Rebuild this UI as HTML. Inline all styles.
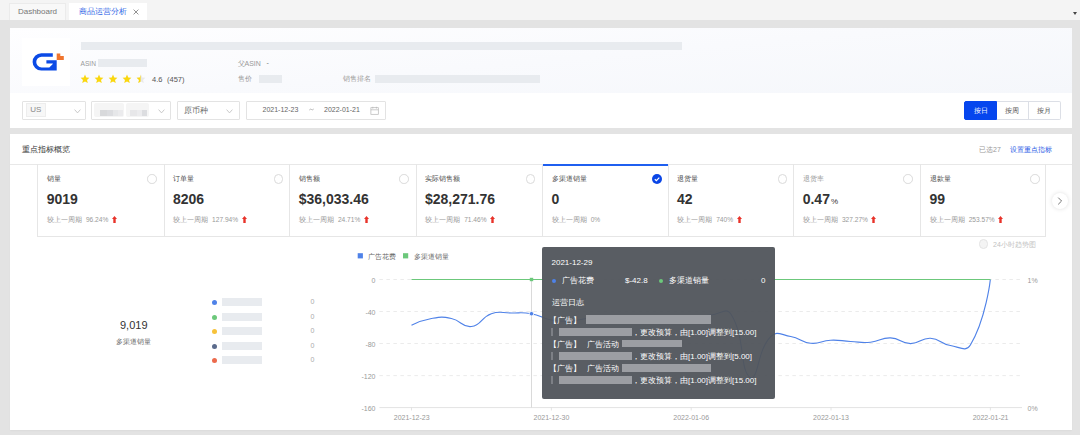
<!DOCTYPE html>
<html><head><meta charset="utf-8">
<style>
*{box-sizing:border-box;margin:0;padding:0}
html,body{width:1080px;height:435px;overflow:hidden}
body{position:relative;background:#e3e3e3;font-family:"Liberation Sans",sans-serif;color:#333}
.a{position:absolute;white-space:nowrap}
.topbar{left:0;top:0;width:1080px;height:20px;background:#f4f4f4}
.tab{position:absolute;top:3px;height:17px;font-size:8px;line-height:17px}
.ph{position:absolute;background:#e8ebef}
.sel{position:absolute;top:101px;height:18.6px;border:1px solid #e3e3e3;background:#fff;border-radius:1px}
.chev{position:absolute;width:7px;height:5px}
.card{position:absolute;top:164px;height:72px;width:126.1px}
.card .lb{position:absolute;left:9.5px;top:10px;font-size:7px;color:#4a4a4a}
.card .rd{position:absolute;right:6.5px;top:10px;width:9.5px;height:9.5px;border:0.8px solid #dadada;border-radius:50%}
.card .val{position:absolute;left:9.3px;top:27.3px;font-size:14px;font-weight:bold;color:#333;letter-spacing:0px}
.card .cmp{position:absolute;left:9.5px;top:51px;font-size:7px;color:#999}
.card .cmp b{font-weight:normal;margin-left:4px;font-size:6.6px}
.card .up{display:inline-block;width:5px;height:7px;margin-left:3.5px;vertical-align:-1px;background:none}
.btn{position:absolute;top:101px;height:18.5px;font-size:7px;line-height:17.5px;text-align:center;border:1px solid #dcdfe6;color:#555;background:#fff}
.tt{font-size:8px;color:#fff}
.cj{display:inline-block;white-space:nowrap}
.tbar{position:absolute;background:#9c9ea3}
</style></head><body>
<div class="a topbar"></div>
<div class="tab" style="left:9px;width:57px;background:#f8f8f8;border:1px solid #ebebeb;border-bottom:none;color:#777;text-align:center;line-height:15.5px">Dashboard</div>
<div class="tab" style="left:69px;width:78px;background:#fff;">
  <span class="a" style="left:9.5px;top:0;color:#2e63e6">商品运营分析</span>
  <svg class="a" style="left:63.5px;top:6.2px" width="6" height="6" viewBox="0 0 6 6"><path d="M0.6 0.6 L5.4 5.4 M5.4 0.6 L0.6 5.4" stroke="#777" stroke-width="0.8"/></svg>
</div>
<div class="a" style="left:1072.6px;top:12px;width:0;height:0;border-left:2.8px solid transparent;border-right:2.8px solid transparent;border-top:3.4px solid #444"></div>

<!-- panel 1 -->
<div class="a" style="left:10px;top:28px;width:1062px;height:100px;background:#fff"></div>
<div class="a" style="left:10px;top:28px;width:1062px;height:65.4px;background:linear-gradient(175deg,#fefeff 0%,#f9fafd 50%,#f5f7fb 100%)"></div>
<div class="a" style="left:22px;top:38px;width:48px;height:48px;background:#fff"></div>
<svg class="a" style="left:22px;top:38px" width="48" height="48" viewBox="0 0 48 48">
  <path d="M30.8 15.2 H19.3 A8.7 8.7 0 0 0 19.3 32.6 H34.7 V22.3 H24.4 V25.5 H30.8 V26 L27.3 29.4 H19.6 A5.35 5.35 0 0 1 19.6 18.7 H30.8 Z" fill="#0b4ae6"/>
  <path d="M34.7 15.5 H38.3 V18 H41.8 V22 H34.7 Z" fill="#f0752e"/>
</svg>
<div class="ph" style="left:81px;top:42px;width:601px;height:8px"></div>
<div class="a" style="left:80.5px;top:59.5px;font-size:6.6px;color:#999">ASIN</div>
<div class="ph" style="left:98px;top:59px;width:49px;height:8px"></div>
<svg class="a" style="left:80px;top:74px" width="70" height="10" viewBox="0 0 70 10"><defs><clipPath id="hc"><rect x="0" y="0" width="4.6" height="10"/></clipPath></defs><path transform="translate(0 0)" d="M5 0.6 L6.25 3.6 L9.4 3.8 L7 5.9 L7.8 9.1 L5 7.4 L2.2 9.1 L3 5.9 L0.6 3.8 L3.75 3.6 Z" fill="#fad70f"/><path transform="translate(14 0)" d="M5 0.6 L6.25 3.6 L9.4 3.8 L7 5.9 L7.8 9.1 L5 7.4 L2.2 9.1 L3 5.9 L0.6 3.8 L3.75 3.6 Z" fill="#fad70f"/><path transform="translate(28 0)" d="M5 0.6 L6.25 3.6 L9.4 3.8 L7 5.9 L7.8 9.1 L5 7.4 L2.2 9.1 L3 5.9 L0.6 3.8 L3.75 3.6 Z" fill="#fad70f"/><path transform="translate(42 0)" d="M5 0.6 L6.25 3.6 L9.4 3.8 L7 5.9 L7.8 9.1 L5 7.4 L2.2 9.1 L3 5.9 L0.6 3.8 L3.75 3.6 Z" fill="#fad70f"/><g transform="translate(56 0)"><path d="M5 0.6 L6.25 3.6 L9.4 3.8 L7 5.9 L7.8 9.1 L5 7.4 L2.2 9.1 L3 5.9 L0.6 3.8 L3.75 3.6 Z" fill="#e9e9e9"/><path d="M5 0.6 L6.25 3.6 L9.4 3.8 L7 5.9 L7.8 9.1 L5 7.4 L2.2 9.1 L3 5.9 L0.6 3.8 L3.75 3.6 Z" fill="#fad70f" clip-path="url(#hc)"/></g></svg>
<div class="a" style="left:152px;top:75px;font-size:7.5px;color:#555">4.6</div>
<div class="a" style="left:167px;top:75px;font-size:7.5px;color:#555">(457)</div>
<div class="a" style="left:237.5px;top:59px;font-size:7px;color:#999"><span class="cj" style="width:7px">父</span>ASIN</div>
<div class="a" style="left:266.5px;top:58.5px;font-size:7px;color:#777">-</div>
<div class="a" style="left:237.5px;top:73.5px;font-size:7px;color:#999">售价</div>
<div class="ph" style="left:259px;top:75px;width:23px;height:7.5px"></div>
<div class="a" style="left:342.5px;top:73.5px;font-size:7px;color:#999">销售排名</div>
<div class="ph" style="left:375px;top:74.5px;width:165px;height:8px"></div>

<!-- filters -->
<div class="sel" style="left:22px;width:64px"></div>
<div class="a" style="left:26px;top:103px;width:19.5px;height:13.5px;background:#f7f7f7;border:1px solid #ededed;font-size:8px;color:#888;line-height:12px;text-align:center">US</div>
<svg class="chev" style="left:73.9px;top:108.6px" viewBox="0 0 7 5"><path d="M0.6 0.6 L3.5 3.9 L6.4 0.6" fill="none" stroke="#bbb" stroke-width="0.8"/></svg>
<div class="sel" style="left:91px;width:80px"></div>
<div class="a" style="left:94px;top:103px;width:30px;height:14px;background:#f5f5f5;border-radius:2px"></div>
<div class="a" style="left:125.5px;top:103px;width:23.5px;height:14px;background:#f5f5f5;border-radius:2px"></div>
<div class="a" style="left:100.0px;top:110px;width:6.5px;height:5.5px;background:#d8d9db;filter:blur(0.5px)"></div><div class="a" style="left:106.5px;top:110px;width:6.5px;height:5.5px;background:#dcdde0;filter:blur(0.5px)"></div><div class="a" style="left:113.0px;top:110px;width:5.0px;height:5.5px;background:#e6e7e9;filter:blur(0.5px)"></div><div class="a" style="left:118.0px;top:110px;width:5.0px;height:5.5px;background:#ebebed;filter:blur(0.5px)"></div><div class="a" style="left:129.5px;top:110px;width:7.5px;height:5.5px;background:#e7e7e9;filter:blur(0.5px)"></div><div class="a" style="left:137.0px;top:110px;width:4.5px;height:5.5px;background:#ececee;filter:blur(0.5px)"></div><div class="a" style="left:141.5px;top:110px;width:5.5px;height:5.5px;background:#dcdde0;filter:blur(0.5px)"></div>

<svg class="chev" style="left:157.9px;top:108.6px" viewBox="0 0 7 5"><path d="M0.6 0.6 L3.5 3.9 L6.4 0.6" fill="none" stroke="#bbb" stroke-width="0.8"/></svg>
<div class="sel" style="left:177px;width:63px"></div>
<div class="a" style="left:184px;top:105px;font-size:8px;color:#666">原币种</div>
<svg class="chev" style="left:226.4px;top:108.6px" viewBox="0 0 7 5"><path d="M0.6 0.6 L3.5 3.9 L6.4 0.6" fill="none" stroke="#bbb" stroke-width="0.8"/></svg>
<div class="sel" style="left:246px;width:140px"></div>
<div class="a" style="left:262.5px;top:105.5px;font-size:7px;color:#666">2021-12-23</div>
<svg class="a" style="left:309px;top:108px" width="5" height="3" viewBox="0 0 5 3"><path d="M0.3 2 Q1.4 0.6 2.5 1.5 T4.7 1" fill="none" stroke="#999" stroke-width="0.7"/></svg>
<div class="a" style="left:324px;top:105.5px;font-size:7px;color:#666">2022-01-21</div>
<svg class="a" style="left:369.5px;top:105.5px" width="9" height="9" viewBox="0 0 9 9"><rect x="0.9" y="1.7" width="7.4" height="6.6" fill="none" stroke="#b5b5b5" stroke-width="0.7"/><line x1="0.9" y1="3.8" x2="8.3" y2="3.8" stroke="#b5b5b5" stroke-width="0.7"/><line x1="2.8" y1="0.8" x2="2.8" y2="2.6" stroke="#b5b5b5" stroke-width="0.7"/><line x1="6.4" y1="0.8" x2="6.4" y2="2.6" stroke="#b5b5b5" stroke-width="0.7"/></svg>

<div class="btn" style="left:964px;width:33px;background:#0646ee;border-color:#0646ee;color:#fff;border-radius:2px 0 0 2px">按日</div>
<div class="btn" style="left:996.5px;width:32.5px;border-left:none">按周</div>
<div class="btn" style="left:1028.5px;width:32px;border-left:none;border-radius:0 2px 2px 0">按月</div>

<!-- panel 2 -->
<div class="a" style="left:10px;top:134px;width:1062px;height:296px;background:#fff;box-shadow:0 1px 1.5px rgba(0,0,0,0.035)"></div>
<div class="a" style="left:22px;top:143.5px;font-size:8px;color:#333">重点指标概览</div>
<div class="a" style="left:979px;top:144.8px;font-size:7px;color:#999"><span class="cj" style="width:14px">已选</span>27</div>
<div class="a" style="left:1009.5px;top:144.8px;font-size:7px;color:#2558e6">设置重点指标</div>
<div class="a" style="left:10px;top:164px;width:1062px;height:1px;background:#e8e8e8"></div>

<div class="card" style="left:37.4px"><div class="lb">销量</div><div class="rd"></div><div class="val">9019</div><div class="cmp"><span class="cj" style="width:35px">较上一周期</span><b>96.24%</b><svg class="up" viewBox="0 0 5 7"><path d="M2.5 0 L5 3 L3.7 3 L3.7 7 L1.3 7 L1.3 3 L0 3 Z" fill="#e8332a"/></svg></div></div>
<div class="card" style="left:163.6px"><div class="lb">订单量</div><div class="rd"></div><div class="val">8206</div><div class="cmp"><span class="cj" style="width:35px">较上一周期</span><b>127.94%</b><svg class="up" viewBox="0 0 5 7"><path d="M2.5 0 L5 3 L3.7 3 L3.7 7 L1.3 7 L1.3 3 L0 3 Z" fill="#e8332a"/></svg></div></div>
<div class="card" style="left:289.4px"><div class="lb">销售额</div><div class="rd"></div><div class="val">$36,033.46</div><div class="cmp"><span class="cj" style="width:35px">较上一周期</span><b>24.71%</b><svg class="up" viewBox="0 0 5 7"><path d="M2.5 0 L5 3 L3.7 3 L3.7 7 L1.3 7 L1.3 3 L0 3 Z" fill="#e8332a"/></svg></div></div>
<div class="card" style="left:415.7px"><div class="lb">实际销售额</div><div class="rd"></div><div class="val">$28,271.76</div><div class="cmp"><span class="cj" style="width:35px">较上一周期</span><b>71.46%</b><svg class="up" viewBox="0 0 5 7"><path d="M2.5 0 L5 3 L3.7 3 L3.7 7 L1.3 7 L1.3 3 L0 3 Z" fill="#e8332a"/></svg></div></div>
<div class="card" style="left:542.2px;"><div class="a" style="left:0;top:0;width:100%;height:2px;background:#1f5ff0"></div><div class="lb">多渠道销量</div><div class="a" style="right:6px;top:10px;width:10px;height:10px;border-radius:50%;background:#0b46e6"><svg width="10" height="10" viewBox="0 0 10 10" style="position:absolute;left:0;top:0"><path d="M2.8 5.2 L4.4 6.7 L7.3 3.6" fill="none" stroke="#fff" stroke-width="1.2"/></svg></div><div class="val">0</div><div class="cmp"><span class="cj" style="width:35px">较上一周期</span><b>0%</b></div></div>
<div class="card" style="left:667.7px"><div class="lb">退货量</div><div class="rd"></div><div class="val">42</div><div class="cmp"><span class="cj" style="width:35px">较上一周期</span><b>740%</b><svg class="up" viewBox="0 0 5 7"><path d="M2.5 0 L5 3 L3.7 3 L3.7 7 L1.3 7 L1.3 3 L0 3 Z" fill="#e8332a"/></svg></div></div>
<div class="card" style="left:793.4px"><div class="lb" style="color:#999">退货率</div><div class="rd"></div><div class="val">0.47<span style="font-size:8px;font-weight:normal;margin-left:1px">%</span></div><div class="cmp"><span class="cj" style="width:35px">较上一周期</span><b>327.27%</b><svg class="up" viewBox="0 0 5 7"><path d="M2.5 0 L5 3 L3.7 3 L3.7 7 L1.3 7 L1.3 3 L0 3 Z" fill="#e8332a"/></svg></div></div>
<div class="card" style="left:920.2px"><div class="lb">退款量</div><div class="rd"></div><div class="val">99</div><div class="cmp"><span class="cj" style="width:35px">较上一周期</span><b>253.57%</b><svg class="up" viewBox="0 0 5 7"><path d="M2.5 0 L5 3 L3.7 3 L3.7 7 L1.3 7 L1.3 3 L0 3 Z" fill="#e8332a"/></svg></div></div>
<div class="a" style="left:37.4px;top:164px;width:1008.6px;height:72.5px;border:1px solid #e6e6e6;border-top:none"></div>
<div class="a" style="left:163.6px;top:164px;width:1px;height:72.5px;background:#e6e6e6"></div>
<div class="a" style="left:289.4px;top:164px;width:1px;height:72.5px;background:#e6e6e6"></div>
<div class="a" style="left:415.7px;top:164px;width:1px;height:72.5px;background:#e6e6e6"></div>
<div class="a" style="left:542.2px;top:164px;width:1px;height:72.5px;background:#e6e6e6"></div>
<div class="a" style="left:667.7px;top:164px;width:1px;height:72.5px;background:#e6e6e6"></div>
<div class="a" style="left:793.4px;top:164px;width:1px;height:72.5px;background:#e6e6e6"></div>
<div class="a" style="left:920.2px;top:164px;width:1px;height:72.5px;background:#e6e6e6"></div>
<div class="a" style="left:1052px;top:193px;width:16px;height:16px;border-radius:50%;background:#fff;box-shadow:0 0 4px rgba(0,0,0,0.13)"></div>
<svg class="a" style="left:1052px;top:193px" width="16" height="16" viewBox="0 0 16 16"><path d="M6.2 4.6 L9.6 8 L6.2 11.4" fill="none" stroke="#666" stroke-width="0.9"/></svg>

<div class="a" style="left:979px;top:239.3px;width:9.3px;height:9.3px;border-radius:50%;background:#f4f4f4;border:0.8px solid #e4e4e4"></div>
<div class="a" style="left:993px;top:240px;font-size:7px;color:#c2c2c2">24小时趋势图</div>

<!-- left summary -->
<div class="a" style="left:120px;top:319px;font-size:11px;color:#333">9,019</div>
<div class="a" style="left:116px;top:337px;font-size:7px;color:#666">多渠道销量</div>
<div class="a" style="left:212.2px;top:300px;width:5px;height:5px;border-radius:50%;background:#4f82e8"></div>
<div class="a" style="left:212.2px;top:314.5px;width:5px;height:5px;border-radius:50%;background:#6cc87b"></div>
<div class="a" style="left:212.2px;top:329px;width:5px;height:5px;border-radius:50%;background:#f7c23a"></div>
<div class="a" style="left:212.2px;top:343.5px;width:5px;height:5px;border-radius:50%;background:#5b6b8c"></div>
<div class="a" style="left:212.2px;top:358px;width:5px;height:5px;border-radius:50%;background:#ec6a4c"></div>
<div class="ph" style="left:221.5px;top:298px;width:40px;height:8px"></div>
<div class="ph" style="left:221.5px;top:312.5px;width:40px;height:8px"></div>
<div class="ph" style="left:221.5px;top:327px;width:40px;height:8px"></div>
<div class="ph" style="left:221.5px;top:341.5px;width:40px;height:8px"></div>
<div class="ph" style="left:221.5px;top:356px;width:40px;height:8px"></div>
<div class="a" style="left:310.5px;top:298px;font-size:7px;color:#aaa">0</div>
<div class="a" style="left:310.5px;top:312.5px;font-size:7px;color:#aaa">0</div>
<div class="a" style="left:310.5px;top:327px;font-size:7px;color:#aaa">0</div>
<div class="a" style="left:310.5px;top:341.5px;font-size:7px;color:#aaa">0</div>
<div class="a" style="left:310.5px;top:356px;font-size:7px;color:#aaa">0</div>

<!-- chart -->
<svg class="a" style="left:0;top:0" width="1080" height="435" viewBox="0 0 1080 435" font-family="Liberation Sans, sans-serif">
  <rect x="357.7" y="253.2" width="5.2" height="5.2" fill="#4f82e8"/>
  <text x="368" y="259" font-size="7" fill="#666">广告花费</text>
  <rect x="403" y="253.2" width="5.2" height="5.2" fill="#6cc87b"/>
  <text x="414" y="259" font-size="7" fill="#666">多渠道销量</text>
  <g stroke="#e6e6e6" stroke-width="0.8" stroke-dasharray="3.5 3.5">
    <line x1="379.4" y1="279.5" x2="1021" y2="279.5"/>
    <line x1="379.4" y1="311.5" x2="1021" y2="311.5"/>
    <line x1="379.4" y1="343.5" x2="1021" y2="343.5"/>
    <line x1="379.4" y1="375.6" x2="1021" y2="375.6"/>
  </g>
  <line x1="379.4" y1="407.6" x2="1022" y2="407.6" stroke="#e3e3e3" stroke-width="1"/>
  <g stroke="#ddd" stroke-width="0.8">
    <line x1="411.5" y1="407.6" x2="411.5" y2="410.5"/>
    <line x1="551.4" y1="407.6" x2="551.4" y2="410.5"/>
    <line x1="691.2" y1="407.6" x2="691.2" y2="410.5"/>
    <line x1="831" y1="407.6" x2="831" y2="410.5"/>
    <line x1="990.4" y1="407.6" x2="990.4" y2="410.5"/>
  </g>
  <g font-size="7" fill="#999" text-anchor="end">
    <text x="375.5" y="282.7">0</text>
    <text x="375.5" y="314.7">-40</text>
    <text x="375.5" y="346.7">-80</text>
    <text x="375.5" y="378.8">-120</text>
    <text x="375.5" y="410.8">-160</text>
  </g>
  <g font-size="7" fill="#999">
    <text x="1027.5" y="282.5">1%</text>
    <text x="1027.5" y="410.5">0%</text>
  </g>
  <g font-size="7" fill="#999" text-anchor="middle">
    <text x="411.7" y="420">2021-12-23</text>
    <text x="551.4" y="420">2021-12-30</text>
    <text x="691.2" y="420">2022-01-06</text>
    <text x="831" y="420">2022-01-13</text>
    <text x="990.6" y="420">2022-01-21</text>
  </g>
  <line x1="531.5" y1="279.5" x2="531.5" y2="407.6" stroke="#d6d6d6" stroke-width="0.9"/>
  <path d="M411.50 325.30 C411.50 325.30 421.21 320.25 431.46 318.50 C441.17 316.85 441.81 316.57 451.42 318.50 C461.77 320.57 461.89 327.64 471.38 326.50 C481.85 325.24 480.51 317.36 491.34 313.70 C500.47 310.61 501.32 313.00 511.30 313.00 C521.28 313.00 521.51 311.99 531.26 313.70 C541.47 315.49 541.01 318.13 551.22 320.00 C560.97 321.78 561.25 321.50 571.18 321.00 C581.21 320.50 581.13 318.25 591.14 318.00 C601.09 317.75 601.12 319.00 611.10 320.00 C621.08 321.00 621.11 322.25 631.06 322.00 C641.07 321.75 640.99 320.00 651.02 319.00 C660.95 318.00 660.99 318.25 670.98 318.00 C680.95 317.75 681.02 318.75 690.94 318.00 C700.98 317.25 700.87 316.00 710.90 315.00 C720.83 314.00 726.28 306.77 730.86 314.00 C746.24 338.27 738.99 371.33 750.82 378.00 C758.95 378.00 756.86 350.98 770.78 336.50 C776.82 330.23 781.03 334.87 790.74 336.50 C800.99 338.22 800.51 342.26 810.70 343.20 C820.47 344.11 820.63 340.63 830.66 340.20 C840.59 339.78 840.63 341.00 850.62 341.50 C860.59 342.00 860.71 343.09 870.58 342.20 C880.67 341.29 880.64 337.55 890.54 337.90 C900.60 338.25 900.49 343.50 910.50 343.60 C920.45 343.70 920.62 337.83 930.46 338.30 C940.58 338.78 940.14 343.77 950.42 345.50 C960.10 347.12 965.87 352.45 970.38 345.00 C985.83 319.45 990.34 279.50 990.34 279.50" fill="none" stroke="#4f82e8" stroke-width="1.15"/>
  <line x1="411.5" y1="279.5" x2="543" y2="279.5" stroke="#6cc87b" stroke-width="1.15"/><line x1="774" y1="279.5" x2="990.4" y2="279.5" stroke="#6cc87b" stroke-width="1.15"/>
  <circle cx="531.5" cy="313.7" r="2.2" fill="#4f82e8" stroke="#fff" stroke-width="0.8"/>
  <rect x="529.8" y="277.8" width="3.4" height="3.4" fill="#6cc87b"/>
</svg>

<!-- tooltip -->
<div class="a" style="left:541.9px;top:247.4px;width:232.8px;height:152px;background:rgba(80,84,91,0.95);border-radius:2px"></div>
<div class="a tt" style="left:551.5px;top:258px">2021-12-29</div>
<div class="a" style="left:551.8px;top:278.7px;width:4.6px;height:4.6px;border-radius:50%;background:#4f82e8"></div>
<div class="a tt" style="left:562px;top:275px">广告花费</div>
<div class="a tt" style="left:625px;top:275.5px">$-42.8</div>
<div class="a" style="left:658.8px;top:278.7px;width:4.6px;height:4.6px;border-radius:50%;background:#6cc87b"></div>
<div class="a tt" style="left:669px;top:275px">多渠道销量</div>
<div class="a tt" style="left:761px;top:275.5px">0</div>
<div class="a tt" style="left:552px;top:297px">运营日志</div>
<div class="a tt" style="left:549px;top:314.5px">【广告】</div>
<div class="tbar" style="left:586px;top:315.4px;width:125px;height:8.3px"></div>
<div class="tbar" style="left:551px;top:328px;width:1.5px;height:7.5px;background:#7d8086"></div>
<div class="tbar" style="left:558.8px;top:328px;width:73px;height:7.5px"></div>
<div class="a tt" style="left:632px;top:326.5px"><span class="cj" style="width:56px">，更改预算，由</span>[1.00]<span class="cj" style="width:24px">调整到</span>[15.00]</div>
<div class="a tt" style="left:549px;top:338.5px">【广告】</div><div class="a tt" style="left:587px;top:338.5px">广告活动</div>
<div class="tbar" style="left:622px;top:339.7px;width:60px;height:7.7px"></div>
<div class="tbar" style="left:551px;top:352px;width:1.5px;height:7.5px;background:#7d8086"></div>
<div class="tbar" style="left:558.8px;top:352px;width:73px;height:7.5px"></div>
<div class="a tt" style="left:632px;top:350.5px"><span class="cj" style="width:56px">，更改预算，由</span>[1.00]<span class="cj" style="width:24px">调整到</span>[5.00]</div>
<div class="a tt" style="left:549px;top:363px">【广告】</div><div class="a tt" style="left:587px;top:363px">广告活动</div>
<div class="tbar" style="left:622px;top:364px;width:89px;height:8px"></div>
<div class="tbar" style="left:551px;top:376px;width:1.5px;height:7.5px;background:#7d8086"></div>
<div class="tbar" style="left:558.8px;top:376px;width:73px;height:7.5px"></div>
<div class="a tt" style="left:632px;top:374.5px"><span class="cj" style="width:56px">，更改预算，由</span>[1.00]<span class="cj" style="width:24px">调整到</span>[15.00]</div>
</body></html>
